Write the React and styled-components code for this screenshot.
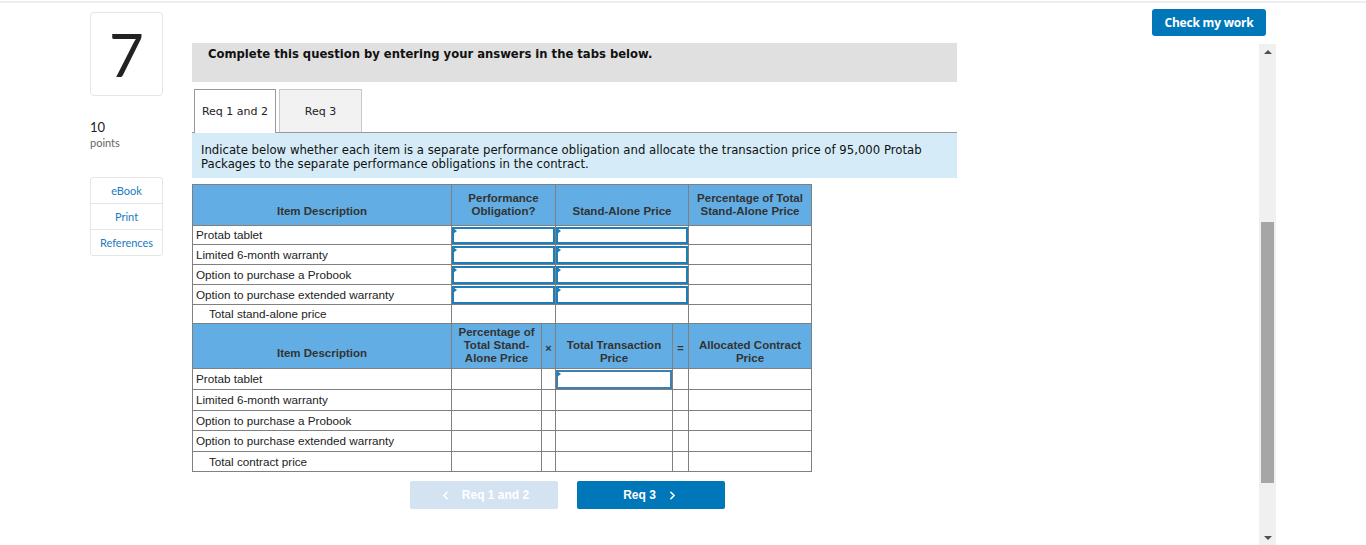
import React from "react";
import styled, { createGlobalStyle } from "styled-components";
import { ChevronLeft, ChevronRight } from "lucide-react";

const GlobalStyle = createGlobalStyle`
  html, body {
    margin: 0;
    padding: 0;
    background: #fff;
    overflow: hidden;
  }
  body {
    font-family: "Liberation Sans", Arial, sans-serif;
    border-top: 2px solid #eeeeee;
    margin-top: 1px;
  }
`;

const Page = styled.div`
  display: flex;
  align-items: flex-start;
  height: 542px;
  padding-left: 90px;
`;

const Sidebar = styled.div`
  width: 73px;
  display: flex;
  flex-direction: column;
  padding-top: 9px;
  font-family: "Lato", "Open Sans", sans-serif;
`;

const NumberBox = styled.div`
  height: 82px;
  border: 1px solid #e6e6e6;
  border-radius: 4px;
  display: flex;
  align-items: center;
  justify-content: center;
  font-size: 60px;
  color: #222;
  line-height: 1;
`;

const Points = styled.div`
  margin-top: 24px;
  font-size: 13px;
  color: #222;
  line-height: 15px;

  span {
    display: block;
    font-size: 11px;
    color: #666;
    line-height: 16px;
  }
`;

const LinkBox = styled.div`
  margin-top: 26px;
  border: 1px solid #e6e6e6;
  border-radius: 3px;
  display: flex;
  flex-direction: column;
`;

const SideLink = styled.a`
  height: 25px;
  display: flex;
  align-items: center;
  justify-content: center;
  font-size: 11px;
  color: #1a7bc1;
  text-decoration: none;
  border-top: ${(p) => (p.$first ? "none" : "1px solid #e6e6e6")};
`;

const Main = styled.div`
  width: 765px;
  margin-left: 29px;
  padding-top: 40px;
  display: flex;
  flex-direction: column;
  font-family: "DejaVu Sans", Verdana, sans-serif;
`;

const Banner = styled.div`
  height: 39px;
  background: #e0e0e0;
  padding: 4px 16px 0;
  box-sizing: border-box;
  font-size: 11.6px;
  font-weight: bold;
  color: #111;
`;

const Tabs = styled.div`
  display: flex;
  gap: 3px;
  margin-top: 7px;
  padding-left: 2px;
  border-bottom: 1px solid #999;
`;

const Tab = styled.div`
  width: ${(p) => (p.$active ? "80px" : "81px")};
  display: flex;
  align-items: center;
  justify-content: center;
  font-size: 11px;
  color: #222;
  background: ${(p) => (p.$active ? "#fff" : "#f2f2f2")};
  border: 1px solid ${(p) => (p.$active ? "#999" : "#c8c8c8")};
  border-bottom: none;
  margin-bottom: ${(p) => (p.$active ? "-1px" : "0")};
  height: ${(p) => (p.$active ? "43px" : "42px")};
`;

const Instructions = styled.div`
  background: #d5ecf8;
  padding: 10px 9px 7px;
  font-size: 11.7px;
  line-height: 14px;
  color: #111;
`;

const Table = styled.table`
  margin-top: 6px;
  border-collapse: collapse;
  table-layout: fixed;
  width: 619px;
  font-family: "Liberation Sans", Arial, sans-serif;
  font-size: 11.7px;
  color: #222;
`;

const Th = styled.th`
  background: #62aee4;
  border: 1px solid #808080;
  font-weight: bold;
  font-size: 11.5px;
  color: #333;
  text-align: center;
  vertical-align: bottom;
  line-height: 13px;
  padding: 0 2px ${(p) => p.$pb || 7}px;
  height: ${(p) => p.$h}px;
  box-sizing: border-box;
`;

const OpTh = styled(Th)`
  padding: 0 0 ${(p) => p.$pb || 7}px;
  font-size: 11px;
`;

const Td = styled.td`
  border: 1px solid #808080;
  border-top-color: ${(p) => (p.$dark ? "#000" : "#808080")};
  padding: 0 0 0 ${(p) => (p.$indent ? 16 : 3)}px;
  height: ${(p) => p.$h}px;
  line-height: 14px;
  white-space: nowrap;
  box-sizing: border-box;
`;

const InputCell = styled.td`
  border: 1px solid #808080;
  padding: 0;
  height: ${(p) => p.$h}px;
  box-sizing: border-box;
`;

const Entry = styled.div`
  position: relative;
  height: ${(p) => p.$h - 2}px;
  border: 2px solid ${(p) => (p.$thin ? "#3c7fb0" : "#1f7dba")};
  box-sizing: border-box;
  background: #fff;

  &::before {
    content: "";
    position: absolute;
    top: -1px;
    left: -1px;
    border-top: 3px solid transparent;
    border-bottom: 3px solid transparent;
    border-left: 4px solid #1f7dba;
  }
`;

const Buttons = styled.div`
  display: flex;
  gap: 19px;
  margin-top: 9px;
  padding-left: 218px;
`;

const NavButton = styled.button`
  width: 148px;
  height: 28px;
  border: none;
  border-radius: 2px;
  display: flex;
  align-items: center;
  justify-content: center;
  gap: 10px;
  font-family: "Liberation Sans", Arial, sans-serif;
  font-weight: bold;
  font-size: 12px;
  color: #fff;
  background: ${(p) => (p.$disabled ? "#d3e3f1" : "#0077b9")};
`;

const Right = styled.div`
  margin-left: auto;
  margin-right: 90px;
  width: 124px;
  display: flex;
  flex-direction: column;
  align-items: flex-end;
  padding-top: 6px;
`;

const CheckButton = styled.button`
  width: 114px;
  height: 27px;
  margin-right: 10px;
  border: none;
  border-radius: 3px;
  background: #0077b9;
  color: #fff;
  font-family: "Open Sans", sans-serif;
  font-weight: bold;
  font-size: 12px;
  letter-spacing: -0.2px;
`;

const ScrollTrack = styled.div`
  margin-top: 8px;
  width: 17px;
  height: 502px;
  background: #f0f0f0;
  display: flex;
  flex-direction: column;
  align-items: center;
`;

const Arrow = styled.div`
  width: 0;
  height: 0;
  border-left: 4px solid transparent;
  border-right: 4px solid transparent;
  ${(p) =>
    p.$down
      ? "border-top: 4px solid #505050; margin-top: auto; margin-bottom: 6px;"
      : "border-bottom: 4px solid #505050; margin-top: 6px;"}
`;

const Thumb = styled.div`
  width: 13px;
  height: 261px;
  margin-top: 168px;
  background: #a6a6a6;
`;

const items = [
  "Protab tablet",
  "Limited 6-month warranty",
  "Option to purchase a Probook",
  "Option to purchase extended warranty",
];

const t1Heights = [19, 20, 20, 20];
const t2Heights = [21, 21, 20, 21];

export default function App() {
  return (
    <>
      <GlobalStyle />
      <Page>
        <Sidebar>
          <NumberBox>7</NumberBox>
          <Points>
            10
            <span>points</span>
          </Points>
          <LinkBox>
            <SideLink $first>eBook</SideLink>
            <SideLink>Print</SideLink>
            <SideLink>References</SideLink>
          </LinkBox>
        </Sidebar>

        <Main>
          <Banner>Complete this question by entering your answers in the tabs below.</Banner>
          <Tabs>
            <Tab $active>Req 1 and 2</Tab>
            <Tab>Req 3</Tab>
          </Tabs>
          <Instructions>
            Indicate below whether each item is a separate performance obligation and allocate the
            transaction price of 95,000 Protab Packages to the separate performance obligations in
            the contract.
          </Instructions>

          <Table>
            <colgroup>
              <col style={{ width: 259 }} />
              <col style={{ width: 90 }} />
              <col style={{ width: 14 }} />
              <col style={{ width: 117 }} />
              <col style={{ width: 16 }} />
              <col style={{ width: 123 }} />
            </colgroup>
            <tbody>
              <tr>
                <Th $h={41}>Item Description</Th>
                <Th $h={41} colSpan={2}>
                  Performance
                  <br />
                  Obligation?
                </Th>
                <Th $h={41} colSpan={2}>
                  Stand-Alone Price
                </Th>
                <Th $h={41}>
                  Percentage of Total
                  <br />
                  Stand-Alone Price
                </Th>
              </tr>
              {items.map((item, i) => (
                <tr key={item}>
                  <Td $h={t1Heights[i]}>{item}</Td>
                  <InputCell $h={t1Heights[i]} colSpan={2}>
                    <Entry $h={t1Heights[i]} />
                  </InputCell>
                  <InputCell $h={t1Heights[i]} colSpan={2}>
                    <Entry $h={t1Heights[i]} />
                  </InputCell>
                  <Td $h={t1Heights[i]} />
                </tr>
              ))}
              <tr>
                <Td $h={19} $indent>
                  Total stand-alone price
                </Td>
                <Td $h={19} colSpan={2} />
                <Td $h={19} colSpan={2} $dark />
                <Td $h={19} $dark />
              </tr>

              <tr>
                <Th $h={45} $pb={8}>
                  Item Description
                </Th>
                <Th $h={45} $pb={3}>
                  Percentage of
                  <br />
                  Total Stand-
                  <br />
                  Alone Price
                </Th>
                <OpTh $h={45} $pb={13}>
                  ×
                </OpTh>
                <Th $h={45} $pb={3}>
                  Total Transaction
                  <br />
                  Price
                </Th>
                <OpTh $h={45} $pb={13}>
                  =
                </OpTh>
                <Th $h={45} $pb={3}>
                  Allocated Contract
                  <br />
                  Price
                </Th>
              </tr>
              {items.map((item, i) => (
                <tr key={"b" + item}>
                  <Td $h={t2Heights[i]}>{item}</Td>
                  <Td $h={t2Heights[i]} />
                  <Td $h={t2Heights[i]} />
                  {i === 0 ? (
                    <InputCell $h={t2Heights[i]}>
                      <Entry $h={t2Heights[i]} $thin />
                    </InputCell>
                  ) : (
                    <Td $h={t2Heights[i]} />
                  )}
                  <Td $h={t2Heights[i]} />
                  <Td $h={t2Heights[i]} />
                </tr>
              ))}
              <tr>
                <Td $h={20} $indent>
                  Total contract price
                </Td>
                <Td $h={20} />
                <Td $h={20} />
                <Td $h={20} />
                <Td $h={20} />
                <Td $h={20} />
              </tr>
            </tbody>
          </Table>

          <Buttons>
            <NavButton $disabled>
              <ChevronLeft size={13} strokeWidth={3} />
              Req 1 and 2
            </NavButton>
            <NavButton>
              Req 3
              <ChevronRight size={13} strokeWidth={3} />
            </NavButton>
          </Buttons>
        </Main>

        <Right>
          <CheckButton>Check my work</CheckButton>
          <ScrollTrack>
            <Arrow />
            <Thumb />
            <Arrow $down />
          </ScrollTrack>
        </Right>
      </Page>
    </>
  );
}
